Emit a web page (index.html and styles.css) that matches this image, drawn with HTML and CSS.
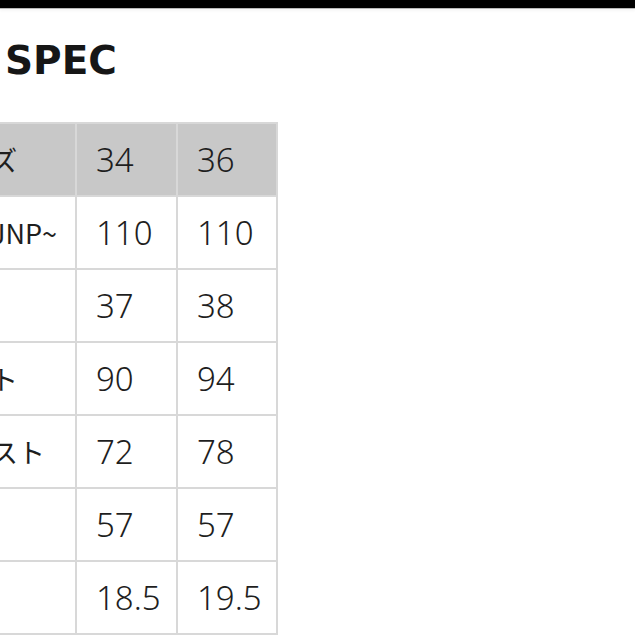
FILE: index.html
```html
<!DOCTYPE html>
<html lang="ja">
<head>
<meta charset="utf-8">
<title>SPEC</title>
<link rel="stylesheet" href="styles.css">
</head>
<body>
<div class="topbar"></div>
<main class="content">
  <h1 class="title">SPEC</h1>
  <div class="spec">
    <div class="cell head label">サイズ</div>
    <div class="cell head">34</div>
    <div class="cell head">36</div>

    <div class="cell label">日本JNP~</div>
    <div class="cell">110</div>
    <div class="cell">110</div>

    <div class="cell label">肩幅</div>
    <div class="cell">37</div>
    <div class="cell">38</div>

    <div class="cell label">バスト</div>
    <div class="cell">90</div>
    <div class="cell">94</div>

    <div class="cell label">ウエスト</div>
    <div class="cell">72</div>
    <div class="cell">78</div>

    <div class="cell label">着丈</div>
    <div class="cell">57</div>
    <div class="cell">57</div>

    <div class="cell label">袖丈</div>
    <div class="cell">18.5</div>
    <div class="cell">19.5</div>
  </div>
</main>
</body>
</html>
```
FILE: styles.css
```css
html, body {
  margin: 0;
  padding: 0;
  background: #ffffff;
  overflow: hidden;
}

body {
  font-family: "Noto Sans", "Noto Sans CJK JP", sans-serif;
  color: #1e1e1e;
}

.topbar {
  height: 8px;
  background: #000000;
  border-bottom: 1px solid #b9b9b9;
  box-shadow: 0 2px 3px rgba(0, 0, 0, 0.04);
}

.content {
  padding-left: 5px;
}

.title {
  margin: 32px 0 0 0;
  font-family: "DejaVu Sans", sans-serif;
  font-size: 39px;
  line-height: 40px;
  font-weight: 700;
  color: #161616;
}

.spec {
  margin-top: 41px;
  margin-left: -93px;
  display: grid;
  grid-template-columns: 163px 101px 100px;
  grid-auto-rows: 73px;
  border-top: 2px solid #d8d8d8;
  border-left: 2px solid #d8d8d8;
  width: max-content;
}

.cell {
  box-sizing: border-box;
  border-right: 2px solid #d8d8d8;
  border-bottom: 2px solid #d8d8d8;
  display: flex;
  align-items: center;
  padding-left: 19px;
  font-size: 33px;
  font-weight: 300;
  white-space: nowrap;
  overflow: hidden;
}

.head {
  background: #c8c8c8;
}

.label {
  font-family: "Noto Sans CJK JP", "Noto Sans", sans-serif;
  font-size: 27px;
  font-weight: 400;
  padding-left: 23px;
}
```
